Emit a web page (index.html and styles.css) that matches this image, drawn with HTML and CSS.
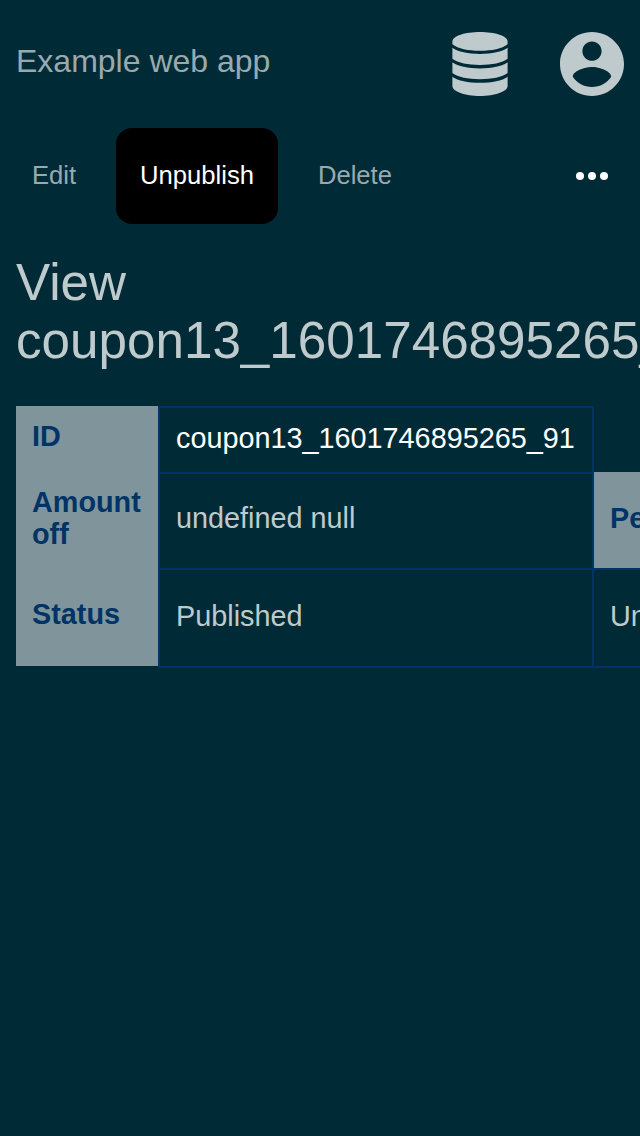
FILE: index.html
```
<!DOCTYPE html>
<html lang="en">
<head>
<meta charset="utf-8">
<title>Example web app</title>
<link rel="stylesheet" href="styles.css">
</head>
<body>
<header class="header">
  <span class="brand">Example web app</span>
  <div class="header-icons">
    <svg class="icon-database" viewBox="0 0 56 64" aria-hidden="true">
      <path d="M.4 9.500C.4 4 13 0 28 0S55.600 4 55.600 9.500V12.200C50 16.700 40 18.700 28 18.700S6 16.700.4 12.200Z"/>
      <path d="M.4 15.800C6 19.800 16 22 28 22S50 19.800 55.600 15.800V26.800C50 31 40 33 28 33S6 31 .4 26.800Z"/>
      <path d="M.4 30.300C6 34.300 16 36.500 28 36.500S50 34.300 55.600 30.300V41C50 45.200 40 47.200 28 47.200S6 45.200 .4 41Z"/>
      <path d="M.4 44.700C6 48.700 16 50.800 28 50.800S50 48.700 55.600 44.700V54C55.600 59.500 43 64 28 64S.4 59.500 .4 54Z"/>
    </svg>
    <svg class="icon-account" viewBox="2 2 20 20" aria-hidden="true">
      <path d="M12 2C6.48 2 2 6.48 2 12s4.480 10 10 10 10-4.480 10-10S17.520 2 12 2zm0 3c1.660 0 3 1.340 3 3s-1.340 3-3 3-3-1.340-3-3 1.340-3 3-3zm0 14.200c-2.500 0-4.710-1.280-6-3.220.03-1.990 4-3.080 6-3.080 1.990 0 5.970 1.090 6 3.080-1.290 1.940-3.500 3.220-6 3.220z"/>
    </svg>
  </div>
</header>
<nav class="nav">
  <a class="nav-item">Edit</a>
  <a class="nav-item nav-item-active">Unpublish</a>
  <a class="nav-item">Delete</a>
  <svg class="icon-more" viewBox="0 0 32 8" aria-hidden="true">
    <circle cx="4" cy="4" r="4"/><circle cx="16" cy="4" r="4"/><circle cx="28" cy="4" r="4"/>
  </svg>
</nav>
<main class="content">
  <h1 class="title">View coupon13_1601746895265_91</h1>
  <div class="details">
    <div class="label label-id">ID</div>
    <div class="value value-id">coupon13_1601746895265_91</div>
    <div class="spacer"></div>
    <div class="label label-amount">Amount off</div>
    <div class="value value-amount">undefined null</div>
    <div class="label label-percent">Percent off</div>
    <div class="label label-status">Status</div>
    <div class="value value-status">Published</div>
    <div class="value value-unpublished">Unpublished</div>
  </div>
</main>
</body>
</html>
```
FILE: styles.css
```
* { box-sizing: border-box; }
html, body { margin: 0; height: 100%; overflow: hidden; }
body {
  background: #002b36;
  color: #bfcacd;
  font-family: "Liberation Sans", Arial, sans-serif;
  font-size: 28.8px;
  line-height: 32px;
}
.header {
  display: flex;
  justify-content: space-between;
  height: 128px;
  padding: 32px 16px 0;
}
.brand { padding-top: 11px; font-size: 32px; line-height: 36px; color: #99aaaf; }
.header-icons { display: flex; gap: 52px; fill: #bfcacd; }
.icon-database { width: 56px; height: 64px; }
.icon-account { width: 64px; height: 64px; }
.nav {
  display: flex;
  align-items: center;
  gap: 24px;
  height: 96px;
  padding: 0 32px 0 16px;
  font-size: 25.6px;
}
.nav-item { height: 96px; line-height: 94px; padding: 0 16px; color: #99aaaf; }
.nav-item-active { padding: 0 24px; border-radius: 16px; background: #000; color: #fff; }
.icon-more { width: 32px; height: 8px; margin-left: auto; fill: #fff; }
.content { padding: 30px 16px 0; }
.title { margin: 0 0 36px; font-size: 51.2px; line-height: 58px; font-weight: 400; }
.details {
  display: grid;
  grid-template-columns: 142px 436px 220px;
  grid-template-rows: 66px 96px 100px;
  width: 798px;
}
.label { padding: 14px 16px 0; background: #80959b; color: #003366; font-weight: 700; }
.label-percent { padding-top: 30px; }
.label-status { padding-top: 30px; height: 98px; }
.value { padding: 14px 14px 0 16px; border: solid #003366; border-width: 2px 2px 0; }
.value-id { color: #fff; }
.value-amount { padding-top: 28px; }
.value-status, .value-unpublished { padding-top: 30px; border-bottom-width: 2px; }
.value-unpublished { border-left: 0; }
```
